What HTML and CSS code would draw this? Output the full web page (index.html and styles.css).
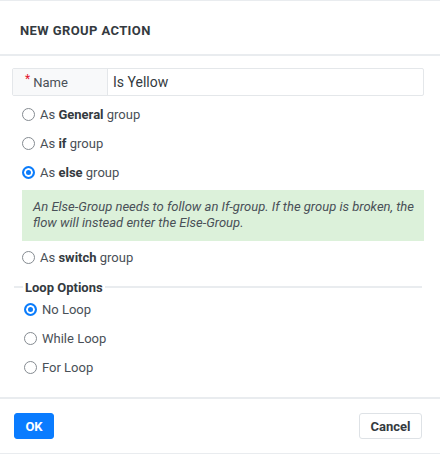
FILE: index.html
```html
<!DOCTYPE html>
<html>
<head>
<meta charset="utf-8">
<link rel="stylesheet" href="styles.css">
</head>
<body>
<div class="modal">
  <div class="modal-header">
    <h5 class="modal-title">New Group Action</h5>
  </div>
  <div class="modal-body">
    <div class="input-group">
      <div class="input-label"><span class="req">*</span>Name</div>
      <div class="input-field">Is Yellow</div>
    </div>
    <div class="radios">
      <label class="radio"><span class="dot"></span><span>As <b>General</b> group</span></label>
      <label class="radio"><span class="dot"></span><span>As <b>if</b> group</span></label>
      <label class="radio"><span class="dot checked"></span><span>As <b>else</b> group</span></label>
    </div>
    <div class="alert">An Else-Group needs to follow an If-group. If the group is broken, the flow will instead enter the Else-Group.</div>
    <div class="radios switch">
      <label class="radio"><span class="dot"></span><span>As <b>switch</b> group</span></label>
    </div>
    <div class="fieldset">
      <div class="legend"><span class="legend-line short"></span><span class="legend-text">Loop Options</span><span class="legend-line"></span></div>
      <div class="loop-radios">
        <label class="radio"><span class="dot checked"></span><span>No Loop</span></label>
        <label class="radio"><span class="dot"></span><span>While Loop</span></label>
        <label class="radio"><span class="dot"></span><span>For Loop</span></label>
      </div>
    </div>
  </div>
  <div class="modal-footer">
    <button class="btn btn-primary">OK</button>
    <button class="btn btn-default">Cancel</button>
  </div>
</div>
</body>
</html>
```
FILE: styles.css
```css
* { box-sizing: border-box; }
html, body { margin: 0; padding: 0; background: #fff; }
body {
  font-family: Roboto, "Liberation Sans", sans-serif;
  color: #343a40;
  font-size: 13px;
}
.modal {
  width: 440px;
  height: 454px;
  border-top: 1px solid #e9ecef;
  border-bottom: 1px solid #e9ecef;
  display: flex;
  flex-direction: column;
}
.modal-header {
  height: 55px;
  border-bottom: 2px solid #e9ecef;
  display: flex;
  align-items: center;
  padding: 0 20px;
}
.modal-title {
  margin: 0;
  font-size: 13px;
  font-weight: 700;
  text-transform: uppercase;
  letter-spacing: 0.4px;
  color: #343a40;
  padding-top: 5px;
}
.modal-body {
  flex: 1;
  padding: 12px 16px 0 12px;
}
.input-group {
  display: flex;
  height: 28px;
  border: 1px solid #e4e7ea;
  border-radius: 2px;
}
.input-label {
  width: 95px;
  background: #f8f9fa;
  border-right: 1px solid #e4e7ea;
  display: flex;
  align-items: center;
  padding-left: 12px;
  font-size: 13px;
  color: #495057;
}
.req { color: #e3142d; font-size: 12px; margin-right: 3px; position: relative; top: -3px; }
.input-field {
  flex: 1;
  display: flex;
  align-items: center;
  padding-left: 5px;
  font-size: 14px;
  color: #343a40;
}
.radios { margin-top: 4px; padding-left: 10px; }
.radio {
  display: flex;
  align-items: center;
  height: 29px;
  font-size: 13px;
  color: #495057;
}
.radio b { font-weight: 700; color: #343a40; }
.dot {
  width: 13px;
  height: 13px;
  border-radius: 50%;
  border: 1px solid #858b91;
  background: #fff;
  margin-right: 5px;
  flex: none;
}
.dot.checked {
  border: 2px solid #0b7cfb;
  background: #0b7cfb;
  box-shadow: inset 0 0 0 2px #fff;
}
.alert {
  margin: 3px 0 0 10px;
  background: #dcf1da;
  padding: 9px 4px 10px 11px;
  font-style: italic;
  font-size: 13px;
  line-height: 16px;
  color: #495057;
  height: 51px;
}
.radios.switch { margin-top: 2px; }
.fieldset { margin-top: 7px; padding-left: 2px; padding-right: 2px; }
.legend {
  display: flex;
  align-items: center;
  height: 16px;
}
.legend-line { flex: 1; height: 2px; background: #e9ecef; }
.legend-line.short { flex: none; width: 9px; }
.legend-text { font-weight: 700; font-size: 13px; color: #343a40; padding: 0 2px; }
.loop-radios { padding-left: 10px; margin-top: 0; }
.modal-footer {
  height: 56px;
  border-top: 2px solid #e9ecef;
  display: flex;
  align-items: center;
  justify-content: space-between;
  padding: 0 18px 0 14px;
}
.btn {
  height: 26px;
  border-radius: 3px;
  font-family: Roboto, "Liberation Sans", sans-serif;
  font-size: 13px;
  font-weight: 700;
  padding: 0 12px;
}
.btn-primary { background: #0a7cff; color: #fff; border: 1px solid #0a7cff; width: 40px; padding: 0; }
.btn-default { background: #fff; color: #343a40; border: 1px solid #dee2e6; width: 63px; padding: 0; }
```
